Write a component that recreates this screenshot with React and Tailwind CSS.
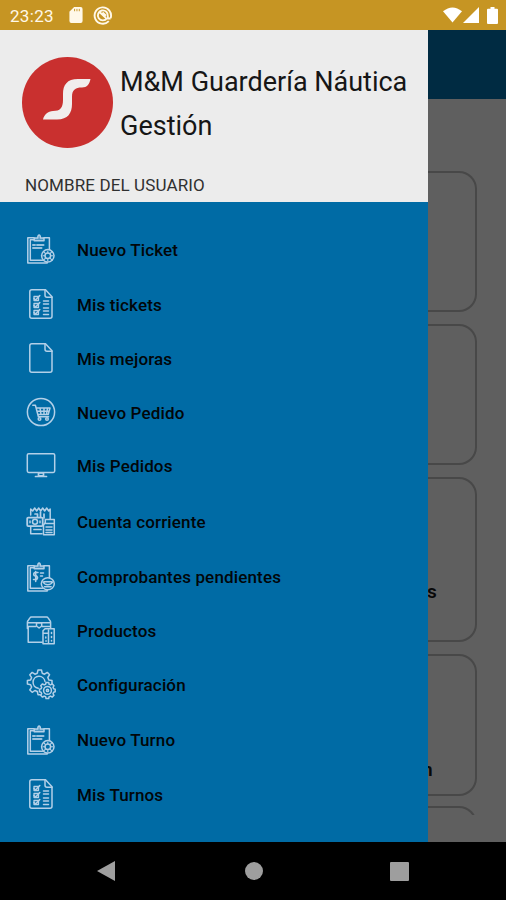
import React from "react";

function Icon({ children }) {
  return (
    <svg
      viewBox="0 0 30 30"
      className="h-[30px] w-[30px] shrink-0 overflow-visible"
      fill="none"
      stroke="#b3d0e8"
      strokeWidth="1.5"
      strokeLinecap="round"
      strokeLinejoin="round"
    >
      {children}
    </svg>
  );
}

function Clipboard() {
  return (
    <>
      <path d="M8 3.7H1.8v25.2h19.4V28M8 5.7H4.3v20.6h12.2M18 3.7h5.4v12" />
      <path d="M8.2 6.8V3.9h3.6q0-3 1.3-3t1.3 3H18v2.9z" fill="#b3d0e8" fillOpacity="0.45" />
    </>
  );
}

function TicketIcon() {
  return (
    <Icon>
      <Clipboard />
      <path d="M7 11h2M11 11h6.5M7 14h8.5" strokeWidth="2" strokeOpacity="0.85" />
      <circle cx="21.8" cy="21.8" r="6.2" fill="#006ba5" />
      <circle cx="21.8" cy="21.8" r="2.8" />
      <path d="M21.8 17v2M21.8 24.8v2M17 21.8h2M24.8 21.8h2M17.5 17.5l1.8 1.8M24.3 24.3l1.8 1.8M26.1 17.5l-1.8 1.8M19.3 24.3l-1.8 1.8" strokeWidth="1.1" />
    </Icon>
  );
}

function PageOutline() {
  return (
    <>
      <path d="M5.8.7h13.7l6.5 7v19.5q0 2-2 2H5.8q-2 0-2-2V2.7q0-2 2-2z" />
      <path d="M19 1v5.2q0 2 2 2h5" />
    </>
  );
}

function ChecklistIcon() {
  return (
    <Icon>
      <PageOutline />
      <path d="M8 9.5l1.6 1.6 4.2-4.6M8 16.5l1.6 1.6 4.2-4.6M8 23.5l1.6 1.6 4.2-4.6" />
      <path d="M8 7.5h4.5v4H8zM8 14.5h4.5v4H8zM8 21.5h4.5v4H8z" strokeWidth="1.3" />
      <path d="M17.5 12h5M17.5 15h5M17.5 19h5M17.5 22h5M17.5 25.5h5" />
    </Icon>
  );
}

function PageIcon() {
  return (
    <Icon>
      <PageOutline />
    </Icon>
  );
}

function CartIcon() {
  return (
    <Icon>
      <circle cx="15" cy="15" r="13.6" />
      <path d="M6.8 8.3h2.6l3 11.4h10.2M10 11h14l-1.8 6.5H12M11 14.2h12M14 11l1 6.5M18 11v6.5M21.5 11l-1 6.5" />
      <circle cx="13.5" cy="22" r="1.3" />
      <circle cx="21" cy="22" r="1.3" />
    </Icon>
  );
}

function MonitorIcon() {
  return (
    <Icon>
      <rect x="1.3" y="2.7" width="27.4" height="18.8" rx="1.4" />
      <path d="M12.5 22h5v2.8h-5zM9.5 25.5h11" strokeWidth="1.7" />
    </Icon>
  );
}

function AccountIcon() {
  return (
    <Icon>
      <path d="M4.7 9V3l2 2 2-3 2 3 2-3 2 3 2-3 2 3 2-3 2 3 1.5-2v10M4.7 20.5v7.3H16" />
      <path d="M9 8h2.5v3M14.5 6v5M18 8v4M8 23.5h7" strokeWidth="1.7" />
      <rect x="1.2" y="11.6" width="15.5" height="8.5" rx="1" strokeWidth="1.8" />
      <circle cx="9" cy="15.8" r="2.5" />
      <path d="M4 15v1.7M14 15v1.7" />
      <path d="M19.3 16.5v-3h9v15.2H17.5V19z" fill="#006ba5" />
      <path d="M19.5 17.5h8M20 21h6M20 24h6M20 26.5h6" />
    </Icon>
  );
}

function VoucherIcon() {
  return (
    <Icon>
      <Clipboard />
      <path d="M12 10.5H8.5q-1.6 2 0 3.3h2q2 1.8.2 3.8H7.5M14.5 11h3M14.5 14h2M9.7 9.5v10" />
      <ellipse cx="21.8" cy="21.8" rx="6.5" ry="6" fill="#006ba5" />
      <path d="M17 20q1.5 2.7 4.8 2.7t4.8-2.7M18 19.8h7.6M18.5 24.7h6.6" />
    </Icon>
  );
}

function ProductsIcon() {
  return (
    <Icon>
      <path d="M1.4 13.5v-6q0-1 .5-1.7l2-3q.5-.8 1.5-.8h15.2q1 0 1.500.8l2 3q.5.7.5 1.7v6M1.5 7.7h23M2 11.5h8M16 11.5h8M2.2 11.5v15.8h14" />
      <path d="M10.5 7.7h5.2V11l-2.6 2-2.6-2z" />
      <path d="M19 13.7h9.2v15H17v-13z" fill="#006ba5" />
      <path d="M17.5 18.2h4M22.5 15v12.5M25.5 17.5v1M25.5 21.5v1M25.5 25.5v.5M19.8 22v1M19.8 26h.5" />
    </Icon>
  );
}

function GearsIcon() {
  return (
    <Icon>
      <path d="M12 1h3.5l.7 3.2 2.3 1 2.8-1.8 2.3 2.3-1.8 2.8 1 2.4 3.2.6v3M12 1l-.7 3.2-2.4 1L6.2 3.4 3.8 5.8l1.8 2.8-1 2.3-3.2.7V15l3.2.7 1 2.4L3.8 21l2.4 2.3 2.7-1.8 2.4 1 .7 3.2h2.2" />
      <path d="M19 12.5a6 6 0 1 0-6.8 6.8" />
      <path d="M20 13.5h2.7l.4 1.8 1.5.6 1.6-1 1.8 1.8-1 1.6.6 1.5 1.6.4v2.6l-1.6.4-.6 1.5 1 1.6-1.8 1.8-1.6-1-1.5.6-.4 1.8H20l-.4-1.8-1.5-.6-1.6 1-1.8-1.8 1-1.6-.6-1.5-1.6-.4v-2.6l1.6-.4.6-1.5-1-1.6 1.8-1.8 1.6 1 1.5-.6z" fill="#006ba5" />
      <circle cx="21.5" cy="21.4" r="3.9" />
      <circle cx="21.5" cy="21.4" r="1.1" />
    </Icon>
  );
}

const items = [
  { label: "Nuevo Ticket", icon: <TicketIcon />, gap: "", lift: "-mt-px" },
  { label: "Mis tickets", icon: <ChecklistIcon />, gap: "mt-0.5", lift: "-mt-px" },
  { label: "Mis mejoras", icon: <PageIcon />, gap: "mt-px", lift: "-mt-px" },
  { label: "Nuevo Pedido", icon: <CartIcon />, gap: "mt-px", lift: "-mt-px" },
  { label: "Mis Pedidos", icon: <MonitorIcon />, gap: "", lift: "" },
  { label: "Cuenta corriente", icon: <AccountIcon />, gap: "mt-[3px]", lift: "-mt-px" },
  { label: "Comprobantes pendientes", icon: <VoucherIcon />, gap: "mt-0.5", lift: "" },
  { label: "Productos", icon: <ProductsIcon />, gap: "mt-px", lift: "-mt-0.5" },
  { label: "Configuración", icon: <GearsIcon />, gap: "mt-px", lift: "-mt-px" },
  { label: "Nuevo Turno", icon: <TicketIcon />, gap: "mt-0.5", lift: "" },
  { label: "Mis Turnos", icon: <ChecklistIcon />, gap: "mt-0.5", lift: "-mt-px" },
];

function StatusBar() {
  return (
    <header className="flex h-[30px] shrink-0 items-center bg-[#c69523] pl-[10px] pr-[8px] text-white">
      <span className="w-[59px] pt-px text-[17px] leading-[30px] tracking-[0.3px] text-[#fff8e8]">23:23</span>
      <svg viewBox="0 0 14 17" className="h-[16px] w-[14px]" fill="#fff8e8">
        <path d="M5 0h7q2 0 2 2v13q0 2-2 2H2q-2 0-2-2V5z" />
        <path d="M5.5 2v2.5M8 2v2.5M10.5 2v2.5" stroke="#c69523" strokeWidth="1" />
      </svg>
      <svg viewBox="0 0 20 20" className="ml-[10px] h-[20px] w-[20px]" fill="none" stroke="#fff8e8" strokeWidth="1.9">
        <path d="M15.8 16.2a8.2 8.2 0 1 1 1.8-3" />
        <path d="M14 13.2a5 5 0 1 1 .8-2v2.3h2.8M6.5 7l6.5 6M9.5 7.5l3.5 3.2" />
      </svg>
      <div className="ml-auto flex items-center">
        <svg viewBox="0 0 20 16" className="h-[16px] w-[19px]" fill="#fff">
          <path d="M0 4Q10-4 20 4L10 16z" />
        </svg>
        <svg viewBox="0 0 16 16" className="ml-px h-[16px] w-[16px]" fill="#fff">
          <path d="M16 0v16H0z" />
        </svg>
        <svg viewBox="0 0 11 17" className="ml-[8px] h-[17px] w-[11px]" fill="#fff">
          <path d="M3.5 0h4v1.7H10q1 0 1 1V16q0 1-1 1H1q-1 0-1-1V2.7q0-1 1-1h2.5z" />
        </svg>
      </div>
    </header>
  );
}

function Drawer() {
  return (
    <aside className="flex w-[428px] shrink-0 flex-col bg-[#006ba5]">
      <div className="h-[172px] shrink-0 bg-[#ececec]">
        <div className="flex pl-[22px] pt-[27px]">
          <svg viewBox="0 0 91 91" className="h-[91px] w-[91px] shrink-0">
            <circle cx="45.5" cy="45.5" r="45.5" fill="#c9302f" />
            <path
              d="M68.5 22H56C45 22 41 28 41 37V43C41 51 38 54 31 54C26 54 22 58 21 62.5H35C46 62.5 50 56 50 47V40C50 33 53 30.5 60 30.5C65 30.5 67.5 27 68.5 22Z"
              fill="#f1eded"
            />
          </svg>
          <h1 className="ml-[7px] mt-[4px] w-[300px] whitespace-nowrap text-[27px] leading-[43.5px] text-[#161616]">
            M&amp;M Guardería Náutica
            <br />
            Gestión
          </h1>
        </div>
        <p className="ml-[25px] mt-[26px] text-[17px] leading-[22px] tracking-[0.12px] text-[#303030]">NOMBRE DEL USUARIO</p>
      </div>
      <nav className="flex flex-col pl-[26px] pt-[21px]">
        {items.map(({ label, icon, gap, lift }) => (
          <div key={label} className={`flex h-[53px] items-center ${gap}`}>
            <div className={lift}>{icon}</div>
            <span className="ml-[21px] whitespace-nowrap text-[17px] font-medium leading-[22px] tracking-[0.15px] text-[#020609]">{label}</span>
          </div>
        ))}
      </nav>
    </aside>
  );
}

function Background() {
  return (
    <main className="min-w-0 flex-1 overflow-hidden bg-[#5f5f5f]">
      <div className="h-[69px] bg-[#002b42]" />
      <div className="flex h-[716px] flex-col overflow-hidden pt-[72px]">
        <div className="h-[141px] w-[49px] shrink-0 rounded-r-[18px] border-2 border-l-0 border-[#484848]" />
        <div className="mt-[12px] h-[141px] w-[49px] shrink-0 rounded-r-[18px] border-2 border-l-0 border-[#484848]" />
        <div className="mt-[12px] flex h-[165px] w-[49px] shrink-0 items-end overflow-hidden rounded-r-[18px] border-2 border-l-0 border-[#484848] pb-[36px]">
          <span className="-ml-[1px] text-[19px] font-semibold leading-[24px] text-[#080808]">s</span>
        </div>
        <div className="mt-[12px] flex h-[142px] w-[49px] shrink-0 items-end overflow-hidden rounded-r-[18px] border-2 border-l-0 border-[#484848] pb-[12px]">
          <span className="-ml-[6px] text-[19px] font-semibold leading-[24px] text-[#080808]">n</span>
        </div>
        <div className="mt-[10px] h-[60px] w-[49px] shrink-0 rounded-r-[18px] border-2 border-l-0 border-[#484848]" />
      </div>
    </main>
  );
}

function NavigationBar() {
  return (
    <footer className="flex h-[58px] shrink-0 items-center bg-black pl-[97px]">
      <svg viewBox="0 0 18 20" className="h-[20px] w-[18px]" fill="#9e9e9e">
        <path d="M18 0v20L0 10z" />
      </svg>
      <div className="ml-[130px] h-[18px] w-[18px] rounded-full bg-[#9e9e9e]" />
      <div className="ml-[127px] h-[19px] w-[19px] rounded-[1px] bg-[#9e9e9e]" />
    </footer>
  );
}

export default function App() {
  return (
    <div className="flex h-[900px] w-[506px] flex-col overflow-hidden bg-black font-['Roboto',sans-serif]">
      <StatusBar />
      <div className="flex min-h-0 flex-1">
        <Drawer />
        <Background />
      </div>
      <NavigationBar />
    </div>
  );
}
